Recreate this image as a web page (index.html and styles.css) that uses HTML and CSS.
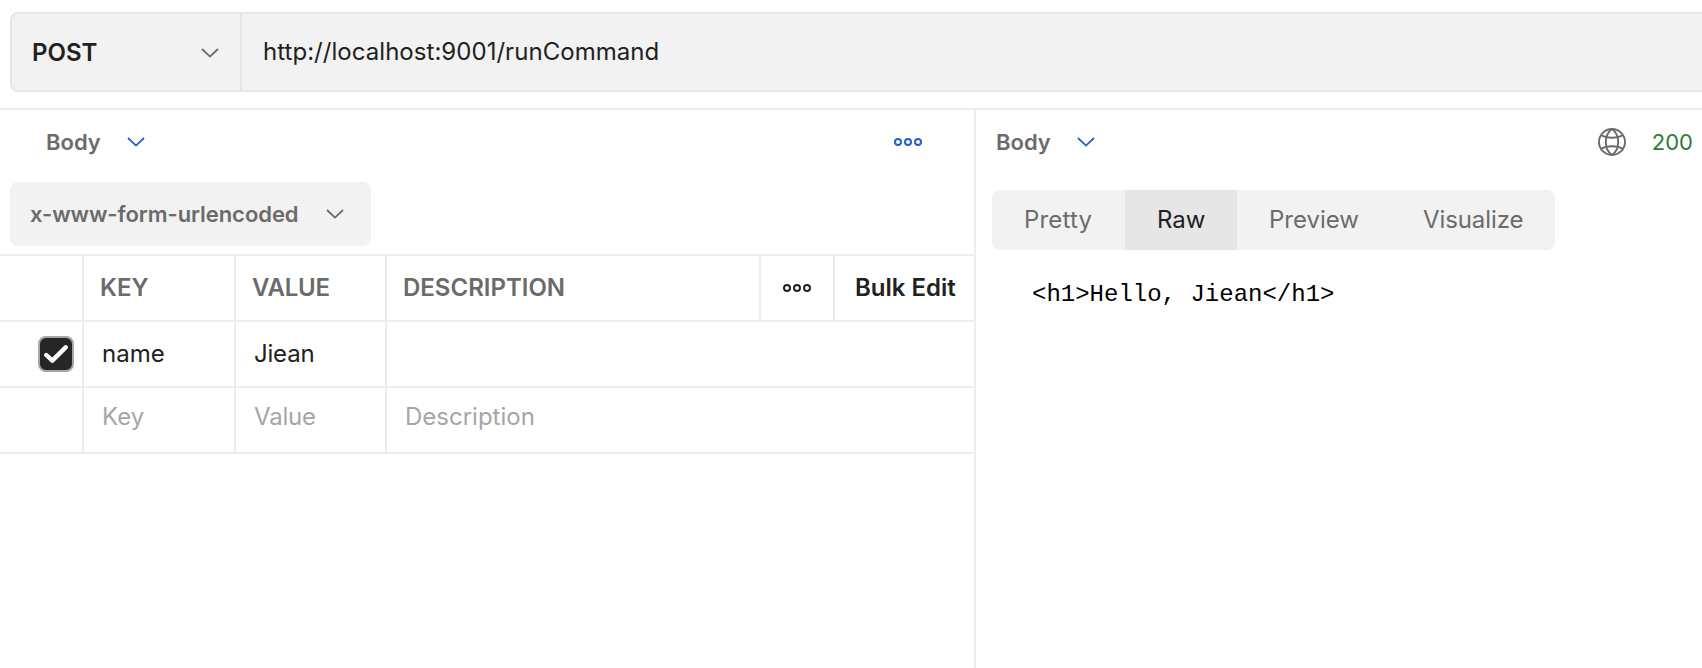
FILE: index.html
```html
<!DOCTYPE html>
<html lang="en">
<head>
<meta charset="utf-8">
<title>Request</title>
<link rel="stylesheet" href="styles.css">
</head>
<body>
<div class="url-row">
  <div class="method"><span>POST</span>
    <svg class="chevron" viewBox="0 0 18 10"><path d="M1 1l8 7.6L17 1"/></svg>
  </div>
  <div class="url">http://localhost:9001/runCommand</div>
</div>
<main class="panes">
  <section class="request">
    <header class="pane-head">
      <span class="title">Body</span>
      <svg class="chevron blue" viewBox="0 0 18 10"><path d="M1 1l8 7.6L17 1"/></svg>
      <svg class="dots blue push" viewBox="0 0 28 8"><circle cx="4" cy="4" r="3"/><circle cx="14" cy="4" r="3"/><circle cx="24" cy="4" r="3"/></svg>
    </header>
    <div class="body-type"><span>x-www-form-urlencoded</span>
      <svg class="chevron" viewBox="0 0 18 10"><path d="M1 1l8 7.6L17 1"/></svg>
    </div>
    <div class="table">
      <div class="row head">
        <div class="cell check"></div>
        <div class="cell key">KEY</div>
        <div class="cell value">VALUE</div>
        <div class="cell desc">DESCRIPTION</div>
        <div class="cell more"><svg class="dots" viewBox="0 0 28 8"><circle cx="4" cy="4" r="3"/><circle cx="14" cy="4" r="3"/><circle cx="24" cy="4" r="3"/></svg></div>
        <div class="cell bulk">Bulk Edit</div>
      </div>
      <div class="row">
        <div class="cell check"><span class="checkbox"><svg viewBox="0 0 24 18"><path d="M2.3 10l6 5.6L21.7 2.4"/></svg></span></div>
        <div class="cell key">name</div>
        <div class="cell value">Jiean</div>
        <div class="cell desc"></div>
      </div>
      <div class="row blank">
        <div class="cell check"></div>
        <div class="cell key">Key</div>
        <div class="cell value">Value</div>
        <div class="cell desc">Description</div>
      </div>
    </div>
  </section>
  <section class="response">
    <header class="pane-head">
      <span class="title">Body</span>
      <svg class="chevron blue" viewBox="0 0 18 10"><path d="M1 1l8 7.6L17 1"/></svg>
      <svg class="globe push" viewBox="0 0 28 28"><circle cx="14" cy="14" r="13"/><path d="M14 .9C5.700 7 5.700 21 14 27.100M14 .9C22.300 7 22.300 21 14 27.100M3.300 7.200C9 10.600 19 10.600 24.700 7.200M3.300 20.800C9 17.400 19 17.400 24.700 20.800"/></svg>
      <span class="status">200</span>
    </header>
    <nav class="tabs">
      <span class="tab pretty">Pretty</span>
      <span class="tab raw">Raw</span>
      <span class="tab preview">Preview</span>
      <span class="tab visualize">Visualize</span>
    </nav>
    <pre class="output">&lt;h1&gt;Hello, Jiean&lt;/h1&gt;</pre>
  </section>
</main>
</body>
</html>
```
FILE: styles.css
```css
* { box-sizing: border-box; }
body {
  margin: 0;
  height: 668px;
  overflow: hidden;
  display: flex;
  flex-direction: column;
  background: #fff;
  color: #212121;
  font: 24px/30px Inter, "Liberation Sans", sans-serif;
  white-space: nowrap;
}
svg { display: block; flex: none; fill: none; stroke: currentColor; }
.chevron { width: 18px; height: 10px; stroke-width: 1.8; color: #6b6b6b; }
.dots { width: 28px; height: 8px; stroke-width: 2; }
.blue { color: #2560d0; }
.push { margin-left: auto; }

.url-row {
  flex: none;
  display: flex;
  height: 80px;
  margin: 12px 0 16px 10px;
  border: 2px solid #e6e6e6;
  border-right: 0;
  border-radius: 8px 0 0 8px;
  background: #f2f2f2;
}
.method {
  display: flex;
  align-items: center;
  justify-content: space-between;
  width: 230px;
  padding: 2px 21px 0 20px;
  border-right: 2px solid #e6e6e6;
  font-weight: 600;
}
.url { padding: 23px 0 0 21px; letter-spacing: 0.04px; }

.panes {
  flex: 1;
  display: flex;
  border-top: 2px solid #ededed;
}
.request { width: 976px; border-right: 2px solid #ededed; }
.response { flex: 1; }
.pane-head {
  display: flex;
  align-items: center;
  height: 64px;
  font-size: 22px;
}
.request .pane-head { padding: 0 52px 0 46px; }
.response .pane-head { padding: 0 9px 0 20px; }
.title { width: 81px; color: #6b6b6b; font-weight: 600; }
.globe { width: 28px; height: 28px; stroke-width: 1.9; color: #6b6b6b; }
.status { margin-left: 26px; color: #2e7d32; }

.body-type {
  display: flex;
  align-items: center;
  justify-content: space-between;
  width: 361px;
  height: 64px;
  margin: 8px 0 8px 10px;
  padding: 0 27px 0 20px;
  border-radius: 8px;
  background: #f2f2f2;
  color: #6b6b6b;
  font-size: 22px;
  font-weight: 600;
  letter-spacing: -0.06px;
}

.table { border-top: 2px solid #ededed; }
.row { display: flex; height: 66px; border-bottom: 2px solid #ededed; }
.cell { display: flex; align-items: center; padding-left: 18px; border-right: 2px solid #ededed; }
.cell:last-child { border-right: 0; }
.check { width: 84px; padding-left: 38px; }
.key { width: 152px; }
.value { width: 151px; letter-spacing: -0.2px; }
.desc { flex: 1; }
.head { color: #6b6b6b; font-weight: 600; }
.head .cell { padding-left: 16px; }
.head .more { width: 74px; padding-left: 22px; color: #212121; }
.head .bulk { width: 139px; padding-left: 20px; color: #212121; }
.blank { color: #a6a6a6; }
.blank .cell { padding-bottom: 6px; }
.checkbox {
  display: flex;
  align-items: center;
  justify-content: center;
  width: 36px;
  height: 36px;
  border: 2px solid #a6a6a6;
  border-radius: 8px;
  background: #262626;
  color: #fff;
}
.checkbox svg { width: 24px; height: 18px; stroke-width: 4.4; stroke-linecap: round; stroke-linejoin: round; }

.tabs {
  display: flex;
  width: 563px;
  height: 60px;
  margin: 16px 0 0 16px;
  border-radius: 8px;
  overflow: hidden;
  background: #f2f2f2;
  color: #6b6b6b;
}
.tab { padding: 15px 0 0 32px; }
.pretty { width: 133px; letter-spacing: 0.2px; }
.raw { width: 112px; background: #e6e6e6; color: #212121; }
.preview { width: 154px; }
.visualize { letter-spacing: -0.1px; }
.output {
  margin: 30px 0 0 56px;
  color: #000;
  font: 24px/30px "Liberation Mono", monospace;
}
```
